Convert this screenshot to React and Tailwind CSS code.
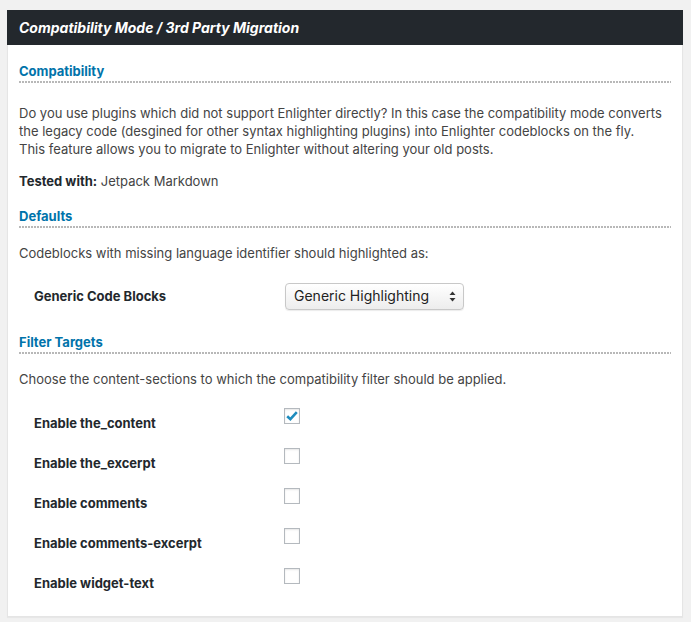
import React from "react";

const font = "[font-family:Inter,'Noto_Sans',sans-serif]";

function Heading({ children, className = "" }) {
  return (
    <div className={className}>
      <div className="text-[13px] leading-[18px] font-bold text-[#0073aa]">{children}</div>
      <div className="mt-[1px] h-[2px] bg-[linear-gradient(to_right,#b8b8b8_2px,transparent_2px)] bg-[length:3px_2px] bg-repeat-x" />
    </div>
  );
}

function Checkbox({ checked }) {
  return (
    <div className="w-4 h-4 border border-[#b4b9be] bg-white shadow-[inset_0_1px_2px_rgba(0,0,0,0.1)] flex items-center justify-center">
      {checked && (
        <svg width="14" height="14" viewBox="0 0 14 14">
          <path d="M2.2 7.2 L5.4 10.2 L11.8 3.2" fill="none" stroke="#1e8cbe" strokeWidth="2.6" strokeLinejoin="miter" />
        </svg>
      )}
    </div>
  );
}

function CheckRow({ label, checked }) {
  return (
    <div className="flex h-[40px]">
      <div className="w-[265px] pl-[15px] pt-[12px] text-[13px] leading-[18px] font-bold text-[#23282d]">{label}</div>
      <div className="pt-[6px]">
        <Checkbox checked={checked} />
      </div>
    </div>
  );
}

export default function App() {
  return (
    <div className={`min-h-[622px] bg-[#f1f1f1] pt-[10px] pl-[7px] pr-[8px] ${font}`}>
      <div className="bg-white border border-[#e5e5e5] shadow-[0_1px_1px_rgba(0,0,0,0.04)]">
        <div className="h-[35px] -m-[1px] mb-0 bg-[#23282d] flex items-center px-3 pl-[12px]">
          <span className="text-white italic font-bold text-[14px]">Compatibility Mode / 3rd Party Migration</span>
        </div>
        <div className="px-[11px] pb-[14px] text-[13px] leading-[18px] text-[#444]">
          <Heading className="mt-[17px]">Compatibility</Heading>
          <p className="mt-[21px]">
            Do you use plugins which did not support Enlighter directly? In this case the compatibility mode converts
            <br />
            the legacy code (desgined for other syntax highlighting plugins) into Enlighter codeblocks on the fly.
            <br />
            This feature allows you to migrate to Enlighter without altering your old posts.
          </p>
          <p className="mt-[14px]">
            <span className="font-bold text-[#23282d]">Tested with:</span> Jetpack Markdown
          </p>
          <Heading className="mt-[17px]">Defaults</Heading>
          <p className="mt-[16px]">Codeblocks with missing language identifier should highlighted as:</p>
          <div className="mt-[14px] flex items-center h-[40px]">
            <div className="w-[266px] pl-[15px] font-bold text-[#23282d]">Generic Code Blocks</div>
            <div className="w-[179px] h-[27px] rounded-[4px] border border-[#c8c8c8] bg-[linear-gradient(to_bottom,#ffffff,#ededed)] shadow-[0_1px_1px_rgba(0,0,0,0.08)] flex items-center justify-between pl-[8px] pr-[7px]">
              <span className="text-[14px] text-[#222]">Generic Highlighting</span>
              <svg width="7" height="11" viewBox="0 0 7 11">
                <path d="M3.5 0.5 L6.5 4 L0.5 4 Z" fill="#333" />
                <path d="M3.5 10.5 L6.5 7 L0.5 7 Z" fill="#333" />
              </svg>
            </div>
          </div>
          <Heading className="mt-[17px]">Filter Targets</Heading>
          <p className="mt-[16px]">Choose the content-sections to which the compatibility filter should be applied.</p>
          <div className="mt-[14px]">
            <CheckRow label="Enable the_content" checked />
            <CheckRow label="Enable the_excerpt" />
            <CheckRow label="Enable comments" />
            <CheckRow label="Enable comments-excerpt" />
            <CheckRow label="Enable widget-text" />
          </div>
        </div>
      </div>
    </div>
  );
}
